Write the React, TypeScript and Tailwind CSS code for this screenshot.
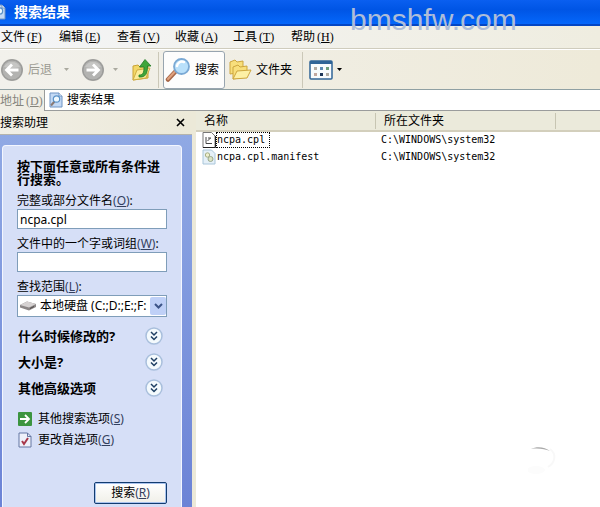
import React, { useState } from "react";
import clsx from "clsx";

type KeyHintProps = {
  letter: string;
  serif?: boolean;
};

const KeyHint = ({ letter, serif }: KeyHintProps) => (
  <span
    className={clsx({
      "pl-0.5 font-['Liberation_Serif',serif]": serif,
      "text-[#33405e]": !serif,
    })}
  >
    (<u className="underline-offset-1">{letter}</u>)
  </span>
);

const menus = [
  { label: "文件", letter: "F" },
  { label: "编辑", letter: "E" },
  { label: "查看", letter: "V" },
  { label: "收藏", letter: "A" },
  { label: "工具", letter: "T" },
  { label: "帮助", letter: "H" },
];

const sections = ["什么时候修改的?", "大小是?", "其他高级选项"];

const SearchPageIcon = () => (
  <svg width="14" height="16" viewBox="0 0 14 16" className="shrink-0">
    <path d="M1 1h9l3 3v11H1z" fill="#c3d9f5" stroke="#6f94c4" />
    <path d="M10 1v3h3" fill="#fff" stroke="#6f94c4" />
    <path d="M5.5 9.5L2 13.500" stroke="#8a7a75" strokeWidth="2" />
    <circle cx="7.500" cy="7" r="3.200" fill="#eef8ff" stroke="#5a92c8" strokeWidth="1.200" />
  </svg>
);

const RoundArrow = ({ forward }: { forward?: boolean }) => (
  <svg width="24" height="24" viewBox="0 0 24 24" className="shrink-0">
    <circle cx="12" cy="12" r="11" fill="#a3a3a1" />
    <circle cx="12" cy="12" r="10" fill="#b3b3b1" stroke="#9b9b99" />
    <path d="M4 9a9 9 0 0 1 16 0a20 12 0 0 1-16 0z" fill="#c6c6c4" />
    <path
      d={forward ? "M5.5 12h12M12 6.5l5.5 5.5-5.5 5.5" : "M18.500 12h-12M12 6.500L6.500 12l5.500 5.500"}
      fill="none"
      stroke="#fff"
      strokeWidth="2.800"
    />
  </svg>
);

const Caret = ({ className }: { className?: string }) => (
  <svg width="5" height="3" viewBox="0 0 5 3" className={clsx("shrink-0", className)}>
    <path d="M0 0h5L2.500 3z" fill="currentColor" />
  </svg>
);

const FolderUpIcon = () => (
  <svg width="20" height="24" viewBox="0 0 20 24" className="shrink-0">
    <path d="M1 22V8l5-1 2 2 8-1v12z" fill="#f3d767" stroke="#c9a437" />
    <path d="M1 22l4-10 13-2-4 10z" fill="#fbec9a" stroke="#cfad42" />
    <path
      d="M7 17c4 0 5-2 5-8H7.500L13 1.500 19 8h-3.500c0 8-2 11.500-8.500 11z"
      fill="#3fa63a"
      stroke="#217a22"
      strokeWidth=".8"
    />
  </svg>
);

const MagnifierIcon = () => (
  <svg width="26" height="26" viewBox="0 0 26 26" className="shrink-0">
    <path d="M10 15L3 22.500" stroke="#a8694a" strokeWidth="4.500" strokeLinecap="round" />
    <path d="M9.500 15L3 22" stroke="#e0a27e" strokeWidth="2" strokeLinecap="round" />
    <circle cx="16.500" cy="9.500" r="7.500" fill="#b9e0fa" stroke="#7aa9d4" strokeWidth="1.800" />
    <path d="M12 9a5 5 0 0 1 7-4" fill="none" stroke="#fff" strokeWidth="2.500" strokeLinecap="round" />
  </svg>
);

const FoldersIcon = () => (
  <svg width="23" height="22" viewBox="0 0 23 22" className="shrink-0">
    <path d="M1 15V3l5-2 2 2 6-1v11z" fill="#f8df7c" stroke="#cda63e" />
    <path d="M4 20V8l5-2 2 2 7-1v11z" fill="#f8df7c" stroke="#cda63e" />
    <path d="M4 20l4-8 14-1-4 8z" fill="#fdf0a5" stroke="#cda63e" />
  </svg>
);

const ViewsIcon = () => (
  <svg width="24" height="20" viewBox="0 0 24 20" className="shrink-0">
    <rect x="1" y="1" width="22" height="18" rx="1" fill="#f8fbfd" stroke="#2f6497" strokeWidth="1.500" />
    <path d="M1 1h22v3H1z" fill="#2f6497" />
    <path d="M5 7h3v3H5zM17 13h3v3h-3z" fill="#b0aba3" />
    <path d="M11 7h3v3h-3z" fill="#5c8bb5" />
    <path d="M17 7h3v3h-3z" fill="#6f9f7c" />
    <path d="M5 13h3v3H5z" fill="#c2a8a0" />
    <path d="M11 13h3v3h-3z" fill="#1c3558" />
  </svg>
);

const DriveIcon = () => (
  <svg width="16" height="10" viewBox="0 0 16 10" className="shrink-0">
    <path d="M0 4l7-3.500L16 3v3L9 9.500 0 6.500z" fill="#8c8787" />
    <path d="M0 4l7-3.500L16 3 9 6.500z" fill="#d6d2d2" />
    <path d="M10 7.500l4-2" stroke="#4f4a4a" />
  </svg>
);

const ExpandIcon = () => (
  <svg width="18" height="18" viewBox="0 0 18 18" className="shrink-0">
    <circle cx="9" cy="9" r="8" fill="#f4fafd" stroke="#a9bfdc" strokeWidth="1.500" />
    <path d="M6 5l3 3 3-3M6 9.500l3 3 3-3" fill="none" stroke="#1f3f63" strokeWidth="1.500" />
  </svg>
);

const GoIcon = () => (
  <svg width="14" height="14" viewBox="0 0 14 14" className="shrink-0">
    <rect width="14" height="14" rx="1" fill="#3c9440" />
    <path d="M2 7h9M7 3l4 4-4 4" fill="none" stroke="#fff" strokeWidth="1.800" />
  </svg>
);

const PreferencesIcon = () => (
  <svg width="14" height="16" viewBox="0 0 14 16" className="shrink-0">
    <path d="M1 1h8.500L13 4.500V15H1z" fill="#eff1fa" stroke="#6577a3" />
    <path d="M9.500 1v3.500H13" fill="none" stroke="#6577a3" />
    <path d="M4 9l2 3 4-6" fill="none" stroke="#a8384a" strokeWidth="2" />
  </svg>
);

const CplIcon = () => (
  <svg width="14" height="16" viewBox="0 0 14 16" className="shrink-0">
    <path d="M1 .5h8.500L13 4v11.500H1z" fill="#fff" stroke="#777" />
    <path d="M13.500 4v11.500H1" fill="none" stroke="#222" />
    <path d="M4 5v6.500h6M5.500 9l3-3M6 6h3" fill="none" stroke="#444" />
  </svg>
);

const ManifestIcon = () => (
  <svg width="14" height="16" viewBox="0 0 14 16" className="shrink-0">
    <path d="M1 1h8.500L13 4.500V15H1z" fill="#e5f0f8" stroke="#a9c6da" />
    <circle cx="5.500" cy="6" r="2.200" fill="#eef0cf" stroke="#a6ae85" />
    <circle cx="8.500" cy="10" r="2.500" fill="#dbe3c4" stroke="#9aa88c" />
  </svg>
);

const files = [
  { name: "ncpa.cpl", folder: "C:\\WINDOWS\\system32", icon: CplIcon },
  { name: "ncpa.cpl.manifest", folder: "C:\\WINDOWS\\system32", icon: ManifestIcon },
];

const SearchPane = () => {
  const [fileName, setFileName] = useState("ncpa.cpl");
  const [phrase, setPhrase] = useState("");

  return (
    <aside className="flex w-48 shrink-0 flex-col">
      <div className="flex h-6 items-center justify-between border-b border-[#b5b4ac] bg-gradient-to-r from-[#f1efe6] to-[#ece9d8] pr-1.5">
        <h2>搜索助理</h2>
        <button aria-label="关闭" className="flex p-px">
          <svg width="9" height="9" viewBox="0 0 9 9">
            <path d="M1 1l7 7M8 1L1 8" stroke="#000" strokeWidth="1.600" />
          </svg>
        </button>
      </div>
      <div className="flex grow bg-gradient-to-b from-[#90a9e4] to-[#6c83d6] pt-2.5 pr-2.5 pl-0.5">
        <form
          className="flex grow flex-col rounded-t-sm border border-b-0 border-[#f3f6ff] bg-[#d6dff7] px-3.5 pt-3.5 pb-1"
          onSubmit={(e) => e.preventDefault()}
        >
          <h3 className="text-[13px] leading-[13px] font-bold">按下面任意或所有条件进行搜索。</h3>
          <label htmlFor="file-name" className="mt-[7px] leading-4">
            完整或部分文件名
            <KeyHint letter="O" />:
          </label>
          <input
            id="file-name"
            value={fileName}
            onChange={(e) => setFileName(e.target.value)}
            className="h-5 w-full border border-[#7f9db9] bg-white px-0.5 outline-none"
          />
          <label htmlFor="phrase" className="mt-[7px] leading-4">
            文件中的一个字或词组
            <KeyHint letter="W" />:
          </label>
          <input
            id="phrase"
            value={phrase}
            onChange={(e) => setPhrase(e.target.value)}
            className="h-5 w-full border border-[#7f9db9] bg-white px-0.5 outline-none"
          />
          <label htmlFor="scope" className="mt-[7px] leading-4">
            查找范围
            <KeyHint letter="L" />:
          </label>
          <div className="flex h-[22px] items-center border border-[#7f9db9] bg-white pl-0.5">
            <DriveIcon />
            <select id="scope" className="ml-1 h-full min-w-0 grow appearance-none bg-transparent outline-none">
              <option>本地硬盘 (C:;D:;E:;F:</option>
            </select>
            <span className="pointer-events-none flex h-[18px] w-4 shrink-0 items-center justify-center rounded-xs bg-[#bfd0f7]">
              <svg width="9" height="6" viewBox="0 0 9 6">
                <path d="M1 1l3.500 3.500L8 1" fill="none" stroke="#3c5488" strokeWidth="2" />
              </svg>
            </span>
          </div>
          <div className="mt-1.5 flex flex-col">
            {sections.map((section) => (
              <button
                key={section}
                type="button"
                className="flex h-[26px] items-center justify-between pr-1 pl-px text-[13px] font-bold"
              >
                {section}
                <ExpandIcon />
              </button>
            ))}
          </div>
          <div className="mt-[7px] flex flex-col pl-px">
            <a href="#options" className="flex h-[21px] items-center gap-1.5">
              <GoIcon />
              <span>
                其他搜索选项
                <KeyHint letter="S" />
              </span>
            </a>
            <a href="#preferences" className="flex h-[21px] items-center gap-1.5">
              <PreferencesIcon />
              <span>
                更改首选项
                <KeyHint letter="G" />
              </span>
            </a>
          </div>
          <button
            type="submit"
            className="mt-8 flex h-[22px] w-[73px] shrink-0 items-center justify-center self-end rounded-xs border border-[#123c70] bg-gradient-to-b from-white to-[#f0efe8] shadow-[inset_0_0_0_1px_#a9c3ee]"
          >
            搜索
            <KeyHint letter="R" />
          </button>
        </form>
      </div>
    </aside>
  );
};

const FileList = () => (
  <main className="min-w-0 grow border-l-4 border-[#ece9d8] bg-white">
    <table className="w-full table-fixed border-collapse">
      <thead>
        <tr className="h-5 border-b-2 border-[#d3cfbc] bg-[#ebeadb] text-left">
          <th className="w-[180px] p-0 font-normal">
            <span className="block border-r border-[#c7c5b2] pl-2 leading-4">名称</span>
          </th>
          <th className="w-[180px] p-0 font-normal">
            <span className="block border-r border-[#c7c5b2] pl-2 leading-4">所在文件夹</span>
          </th>
          <th className="p-0" />
        </tr>
      </thead>
      <tbody className="font-['DejaVu_Sans_Mono',monospace] text-[10px]">
        {files.map((file, i) => (
          <tr key={file.name} className="h-[17px]">
            <td className="p-0 pl-1.5">
              <div className="flex items-center">
                <file.icon />
                <span
                  className={clsx("border border-dotted pr-1 leading-[14px]", {
                    "border-black": i === 0,
                    "border-transparent": i !== 0,
                  })}
                >
                  {file.name}
                </span>
              </div>
            </td>
            <td className="p-0 pl-[5px]">{file.folder}</td>
            <td className="p-0" />
          </tr>
        ))}
      </tbody>
    </table>
  </main>
);

const App = () => {
  return (
    <div className="relative flex min-h-screen flex-col overflow-hidden bg-white font-['Noto_Sans','Noto_Sans_CJK_SC',sans-serif] text-[12px] leading-4 text-black">
      <header className="flex h-[26px] shrink-0 items-center gap-2 bg-gradient-to-b from-[#0a5ff0] via-[#0055e5] via-40% to-[#0567fb] border-b-2 border-[#0346c4]">
        <span className="-ml-2 flex">
          <SearchPageIcon />
        </span>
        <h1 className="text-[14px] font-bold text-white">搜索结果</h1>
      </header>

      <nav className="flex h-[23px] shrink-0 items-center gap-4 border-b border-[#cfccbd] bg-gradient-to-r from-[#f4f5f7] to-[#efede0] pl-px">
        {menus.map((menu) => (
          <button key={menu.letter} className="w-[42px] whitespace-nowrap text-left">
            {menu.label}
            <KeyHint letter={menu.letter} serif />
          </button>
        ))}
      </nav>

      <div className="flex h-[41px] shrink-0 items-center border-t border-b border-t-white border-b-[#8fa0a3] bg-gradient-to-r from-[#f2f1ec] to-[#eeead9]">
        <button className="flex items-center gap-1 text-[#9b9a92]">
          <RoundArrow />
          后退
        </button>
        <Caret className="ml-3 text-[#aaa99f]" />
        <button aria-label="前进" className="ml-3">
          <RoundArrow forward />
        </button>
        <Caret className="ml-2 text-[#aaa99f]" />
        <button aria-label="向上" className="ml-3.5">
          <FolderUpIcon />
        </button>
        <div className="ml-1.5 h-9 w-px bg-[#cbc8b8]" />
        <button className="ml-1 flex h-[38px] w-[62px] items-center gap-1 rounded-[3px] border border-[#98a5af] bg-[#fdfdfc] pl-px">
          <MagnifierIcon />
          <span className="whitespace-nowrap">搜索</span>
        </button>
        <button className="ml-1 flex items-center gap-1">
          <FoldersIcon />
          文件夹
        </button>
        <div className="ml-2.5 h-9 w-px bg-[#cbc8b8]" />
        <button aria-label="查看方式" className="ml-1.5 flex items-center gap-1">
          <ViewsIcon />
          <Caret />
        </button>
      </div>

      <div className="flex h-[21px] shrink-0 items-stretch bg-[#f0eee5]">
        <label htmlFor="address" className="flex w-11 shrink-0 items-center whitespace-nowrap text-[#85847c]">
          地址
          <KeyHint letter="D" serif />
        </label>
        <div className="flex grow items-center gap-1 border-b border-l border-[#9a9c9c] bg-white pl-1">
          <SearchPageIcon />
          <input id="address" defaultValue="搜索结果" className="min-w-0 grow outline-none" />
        </div>
      </div>

      <div className="flex grow">
        <SearchPane />
        <FileList />
      </div>

      <p className="pointer-events-none absolute top-0.5 left-[350px] font-['Liberation_Sans',sans-serif] text-[30px] leading-9 text-[#aebdd8]">
        bmshfw.com
      </p>
      <svg
        width="40"
        height="40"
        viewBox="0 0 40 40"
        className="pointer-events-none absolute right-8 bottom-6"
        aria-hidden="true"
      >
        <path d="M3 5c6-3 14-2 19 2-5-2-12-3-19-2z" fill="#aaa" />
        <path d="M22 5c7 5 5 14-2 18" fill="none" stroke="#f8f8f8" strokeWidth="2" />
        <ellipse cx="8" cy="26" rx="9" ry="4" fill="#fcfcfc" />
      </svg>
    </div>
  );
};

export default App;
